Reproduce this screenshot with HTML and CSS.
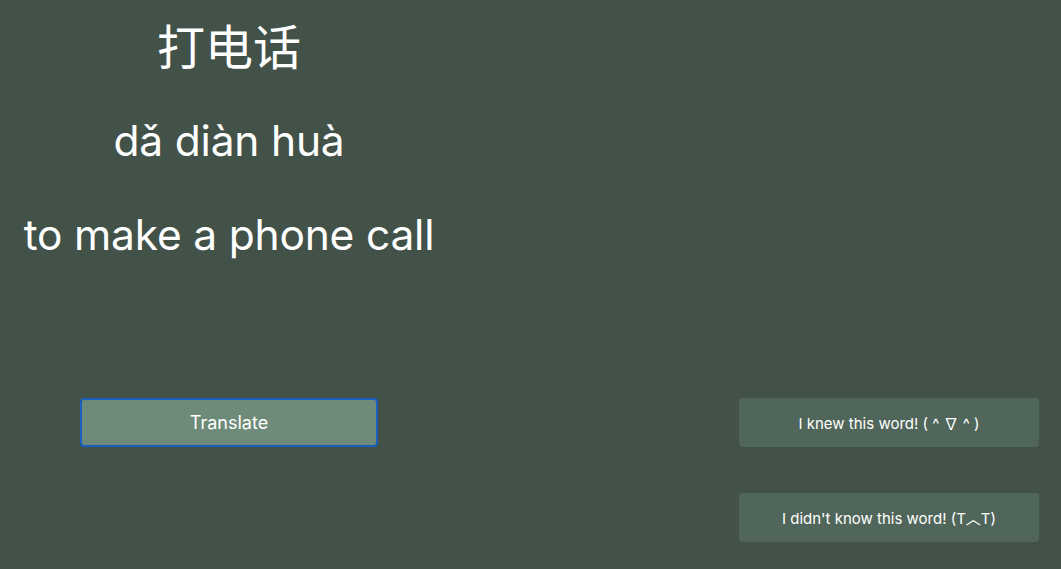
FILE: index.html
```html
<!DOCTYPE html>
<html lang="zh">
<head>
<meta charset="utf-8">
<link rel="stylesheet" href="styles.css">
<title>Flashcard</title>
</head>
<body>
<main class="page">
  <section class="card">
    <h1 class="hanzi">打电话</h1>
    <h2 class="pinyin">dǎ diàn huà</h2>
    <h2 class="meaning">to make a phone call</h2>
  </section>
  <div class="left-actions">
    <button class="btn translate">Translate</button>
  </div>
  <div class="right-actions">
    <button class="btn answer">I knew this word! ( ^ ∇ ^ )</button>
    <button class="btn answer">I didn't know this word! (T︿T)</button>
  </div>
</main>
</body>
</html>
```
FILE: styles.css
```css
html, body {
  margin: 0;
  padding: 0;
  background: #435249;
  height: 100%;
}
body {
  font-family: Inter, "Noto Sans CJK SC", sans-serif;
  color: #ffffff;
}
.page {
  display: grid;
  grid-template-columns: 458px 1fr;
  grid-template-rows: 398px auto;
}
.card {
  grid-column: 1;
  grid-row: 1;
  text-align: center;
  display: flex;
  flex-direction: column;
  align-items: center;
}
.hanzi {
  margin: 14px 0 0;
  font-family: "Noto Sans CJK SC", sans-serif;
  font-weight: 400;
  font-size: 48px;
  line-height: 60px;
}
.pinyin {
  margin: 42px 0 0;
  font-weight: 400;
  font-size: 42.5px;
  line-height: 50px;
  letter-spacing: -0.2px;
}
.meaning {
  margin: 44px 0 0;
  font-weight: 400;
  font-size: 42.5px;
  line-height: 50px;
  letter-spacing: -0.2px;
}
.left-actions {
  grid-column: 1;
  grid-row: 2;
  display: flex;
  justify-content: center;
}
.right-actions {
  grid-column: 2;
  grid-row: 2;
  display: flex;
  flex-direction: column;
  align-items: flex-end;
  gap: 46px;
  padding-right: 22px;
}
.btn {
  font-family: Inter, "Noto Sans CJK SC", sans-serif;
  color: #ffffff;
  border: none;
  border-radius: 4px;
  height: 49px;
  cursor: pointer;
}
.translate {
  width: 298px;
  background: #6e8b79;
  border: 2px solid #1a5fbf;
  font-size: 18px;
}
.answer {
  width: 300px;
  background: #51665a;
  font-size: 15px;
}
```
